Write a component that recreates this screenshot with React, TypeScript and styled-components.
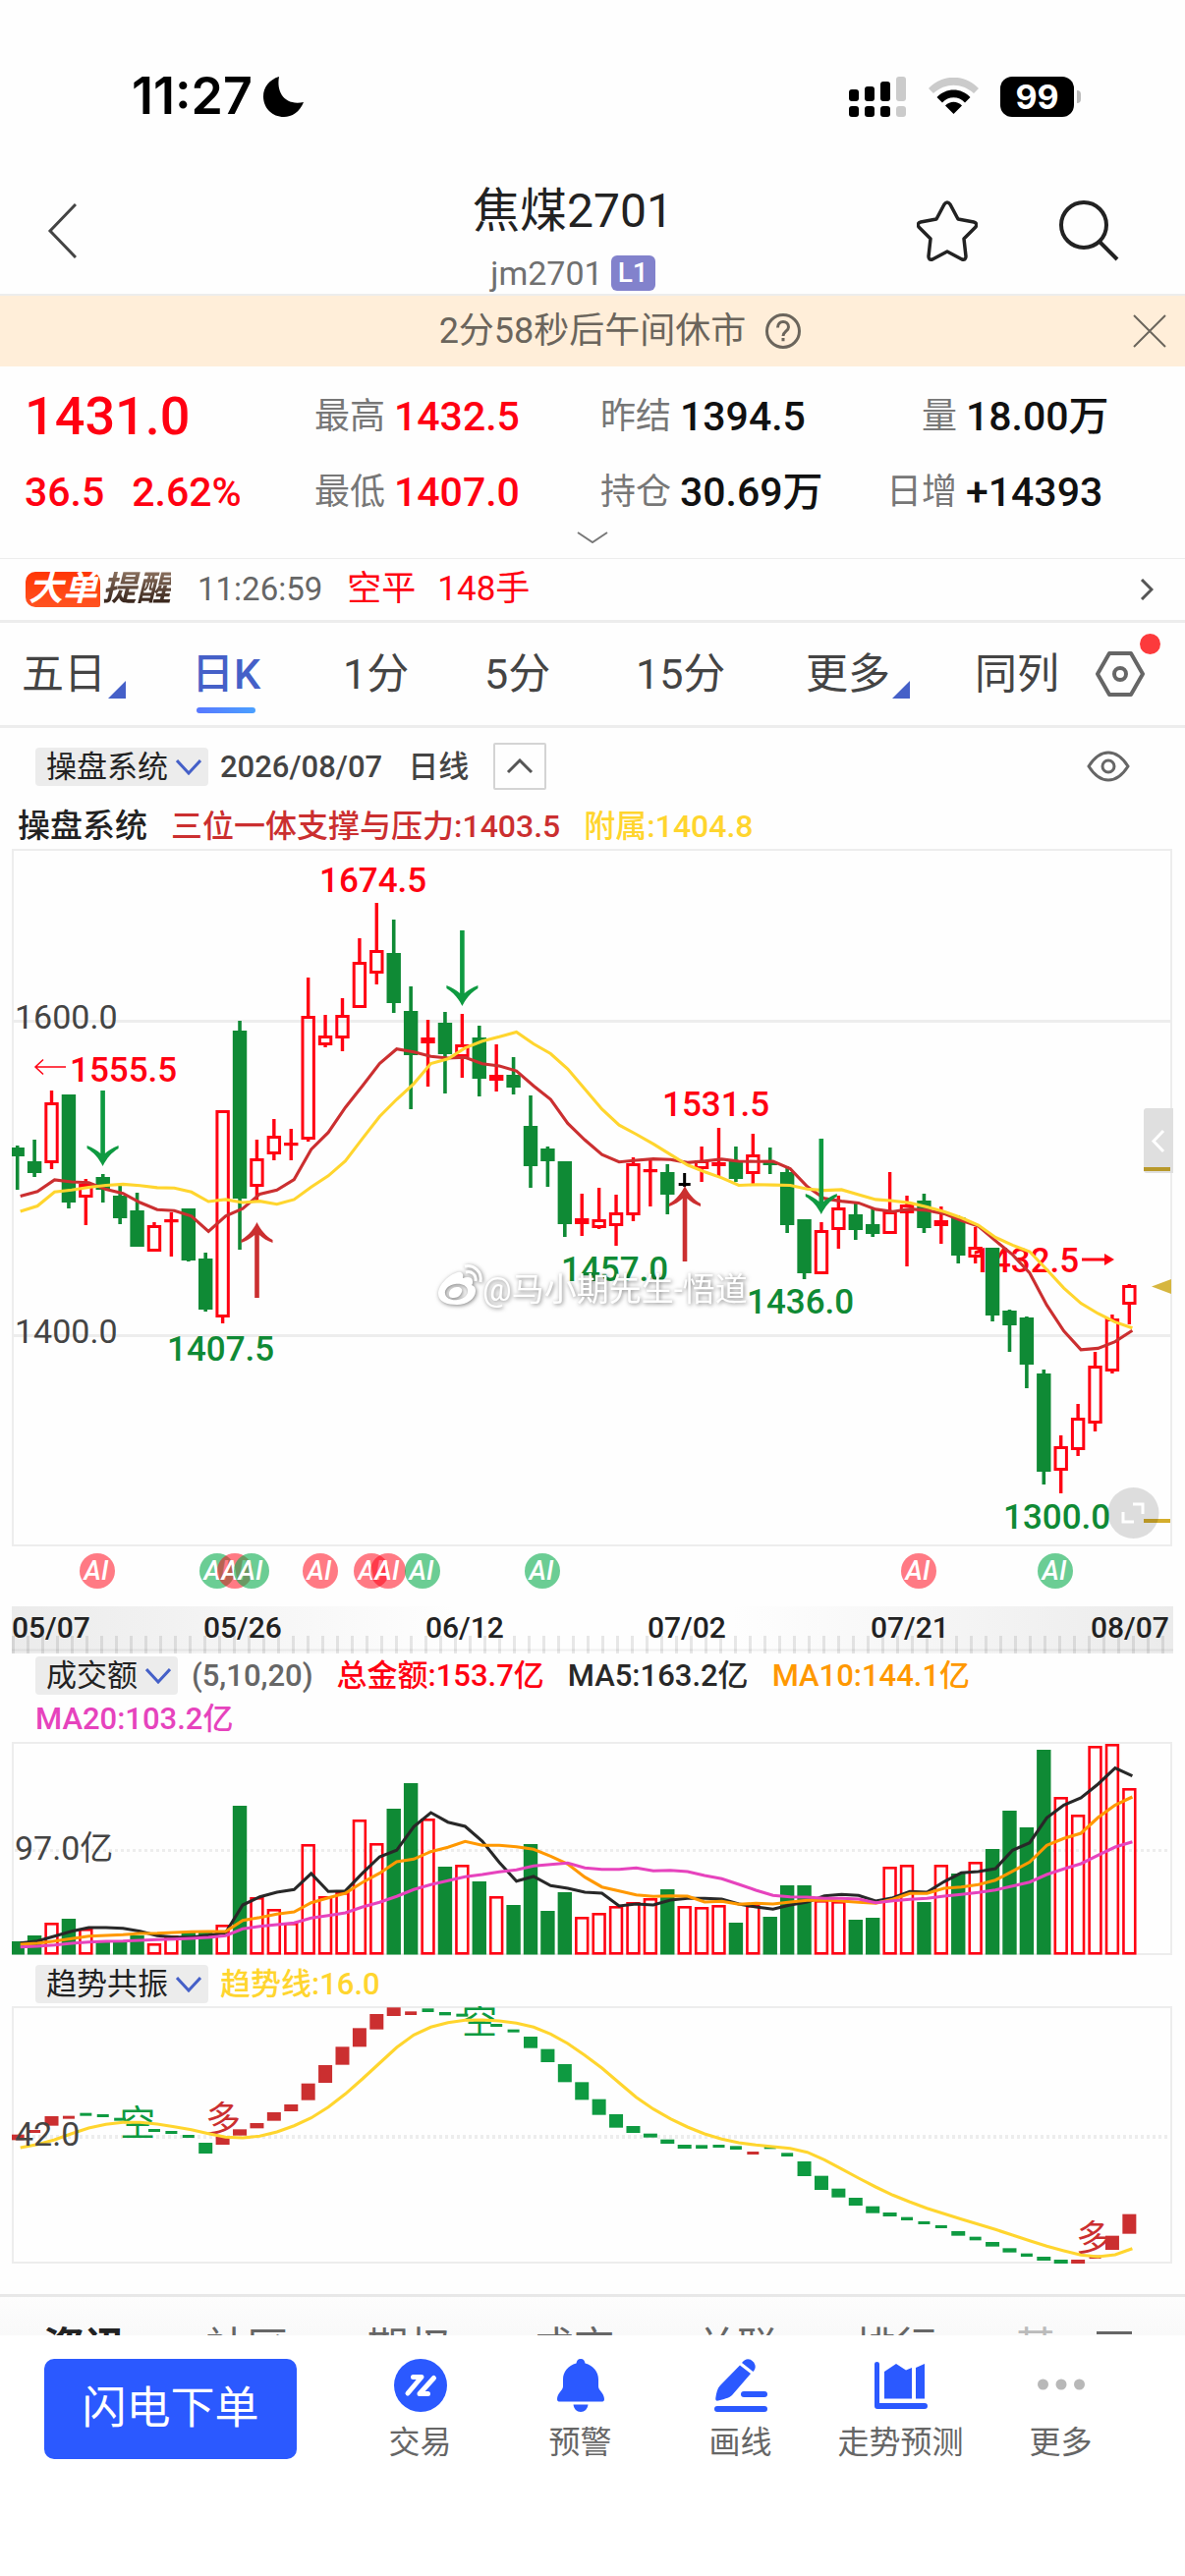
import React from 'react';
import styled, { createGlobalStyle, css } from 'styled-components';

const RED = '#ff0012';
const GREEN = '#0f8a35';
const TREND_RED = '#cb2f30';
const TREND_GREEN = '#0e9a41';
const YELLOW = '#ffd52e';
const BLUE = '#2b59ff';
const LINK = '#4560c8';
const RULE = '#ededed';
const FONT = "Roboto, 'Noto Sans CJK SC', sans-serif";

const GlobalStyle = createGlobalStyle`
  *, *::before, *::after { box-sizing: border-box; }
  body { margin: 0; background: #fefefe; font-family: ${FONT}; color: #222; }
  button, select { font-family: inherit; color: inherit; border: 0; padding: 0; margin: 0; background: none; }
  dl, dt, dd, h1, p { margin: 0; font-weight: 400; }
  svg { display: block; }
`;

/* ---------- market data ---------- */

const STEP = 17.41;
const slotX = (i: number) => 17.7 + i * STEP;

type Tone = 'g' | 'r' | 'k';
interface Candle { tone: Tone; high: number; top: number; bottom: number; low: number }

const candles: Candle[] = `
g306,308,317,351 g300,322,334,338 r250,262,324,330 g254,254,364,370 r340,345,359,387 g335,338,351,364
g347,357,380,386 g354,372,409,409 r384,387,414,414 r374,381,384,419 g370,370,423,424 g415,421,473,475
r270,270,481,487 g179,189,360,412 r300,319,348,363 r279,296,315,321 r289,303,306,321 r135,174,300,302
r173,194,204,206 r156,173,197,210 r95,119,166,166 r59,107,131,142 g76,110,161,171 g144,169,214,269
r178,196,202,246 g170,181,213,253 r172,203,216,237 g184,196,238,256 r203,234,240,251 g216,234,247,254
g255,286,327,349 g307,309,322,348 g322,322,386,399 r355,380,386,398 r349,381,390,391 r356,374,388,408
r318,324,377,383 r320,330,333,368 g325,333,356,376 k334,344,347,348 r307,321,330,343 r288,323,327,337
g307,322,340,343 r294,315,335,345 g308,323,326,335 g327,333,387,395 g381,381,436,442 r384,392,437,437
r357,369,392,411 g363,376,392,402 g369,386,396,399 r333,373,396,396 r357,366,375,429 g355,362,390,395
r368,382,388,406 g377,379,418,426 r389,409,420,426 g410,410,479,485 g473,474,489,516 g480,481,529,553
g534,538,638,651 r601,612,637,660 r569,583,616,622 r516,530,589,597 r478,482,536,538 r447,448,468,488
`.trim().split(/\s+/).map((s) => {
  const [high, top, bottom, low] = s.slice(1).split(',').map(Number);
  return { tone: s[0] as Tone, high, top, bottom, low };
});

const list = (s: string) => s.trim().split(/\s+/).map(Number);

const supportLine = list(`1038 1024 990 996 998 1018 1030 1057 1078 1081 1097 1142 1097 1075 1032 1020 989 900 850 776
712 646 603 612 625 630 628 647 653 668 712 752 823 872 915 937 932 928 930 939 934 929 935 936 935 957 1010 1045 1053
1058 1077 1084 1076 1080 1090 1110 1127 1170 1211 1265 1360 1437 1492 1488 1468 1435`);
const subLine = list(`1083 1067 1026 1020 1012 1006 1003 1007 1013 1014 1026 1054 1048 1057 1053 1062 1048 1011 978 934
868 803 752 706 646 632 600 580 567 553 588 617 662 722 781 828 855 884 915 946 966 984 1006 1004 1005 1006 1017 1021
1019 1034 1048 1052 1058 1070 1084 1102 1124 1160 1183 1202 1255 1310 1355 1385 1410 1428`);

const volumes = list(`206 200 187 183 193 207 206 200 208 200 197 197 189 68 161 173 187 107 160 156 82 106 71 45 81
130 128 145 160 169 107 175 156 181 177 170 166 162 153 170 171 169 187 169 181 149 149 164 165 184 182 130 128 166 128
137 125 112 73 90 11 59 77 7 5 50`);
const ma5 = list(`1253 1247 1232 1217 1206 1206 1208 1217 1231 1235 1235 1229 1222 1137 1112 1098 1090 1041 1096 1094
1040 990 970 898 855 884 897 942 1007 1064 1050 1078 1086 1098 1101 1140 1134 1137 1122 1117 1117 1119 1134 1143 1150
1137 1128 1109 1105 1108 1125 1115 1096 1098 1066 1039 1035 1026 970 947 871 832 810 768 719 743`);
const ma10 = list(`1257 1254 1247 1240 1232 1230 1228 1224 1223 1221 1219 1218 1218 1184 1175 1165 1158 1130 1115 1101
1068 1040 1005 997 974 961 943 955 955 959 967 988 1012 1052 1082 1094 1106 1111 1109 1110 1128 1126 1135 1132 1134
1128 1123 1122 1125 1129 1132 1120 1102 1102 1086 1082 1075 1061 1034 1006 955 934 918 870 832 807`);
const ma20 = list(`1265 1263 1259 1254 1250 1248 1247 1245 1243 1241 1239 1236 1231 1210 1202 1197 1192 1177 1169 1161
1143 1129 1111 1090 1075 1063 1051 1044 1036 1030 1018 1013 1009 1024 1028 1028 1024 1033 1031 1035 1047 1057 1074 1092
1108 1112 1113 1117 1117 1119 1130 1124 1120 1117 1110 1105 1099 1091 1079 1067 1044 1027 1011 985 960 944`);

const trendBlocks = `r548,565 r534,543 r492,521 r491,500 g482,491 g486,495 g497,506 g513,522 g531,540 g537,546
g549,558 g573,606 r555,579 r532,551 r513,529 r480,506 r456,477 r392,443 r336,390 r280,335 r223,280 r180,227 r160,186
r172,183 g163,174 g174,184 g179,188 g200,210 g210,219 g227,236 g249,284 g287,327 g333,388 g388,442 g440,488 g486,527
g522,543 g545,557 g563,576 g579,591 g580,591 g579,588 g583,594 r600,609 g584,592 g604,615 g630,675 g674,717 g713,740
g741,765 g767,788 g786,798 g800,810 g813,822 g825,834 g843,857 g860,871 g876,890 g895,908 g911,921 g921,933 g930,942
r930,942 r917,927 r857,900 r791,851`.split(/\s+/).map((s) => {
  const [top, bottom] = s.slice(1).split(',').map(Number);
  return { up: s[0] === 'r', top, bottom };
});
const trendLine = list(`588 578 564 545 528 517 511 511 516 524 533 545 556 558 553 540 521 497 464 424 378 330 282
244 220 206 199 198 201 208 220 241 270 306 345 390 434 470 500 525 546 562 573 580 585 590 602 625 653 681 708 733 754
773 790 806 822 838 855 872 889 903 916 921 915 896`);

const priceY = (v: number) => v / 2.9037;
const volumeY = (v: number) => (v - 630) / 3;
const trendY = (v: number) => v / 3 - 52;

const toPoints = (values: number[], scale: (v: number) => number) =>
  values.map((v, i) => `${(slotX(i) + 3).toFixed(1)},${scale(v).toFixed(1)}`).join(' ');

/* ---------- page parts ---------- */

const Page = styled.main`
  display: flex;
  flex-direction: column;
  width: 100%;
`;

const StatusBar = styled.div`
  display: flex;
  justify-content: space-between;
  align-items: center;
  height: 150px;
  padding: 46px 105px 0 134px;
`;
const StatusGroup = styled.div<{ $gap: number }>`
  display: flex;
  align-items: center;
  gap: ${(p) => p.$gap}px;
`;
const Clock = styled.time`
  font: 600 52px/60px Inter, sans-serif;
  color: #000;
`;
const Battery = styled.span`
  position: relative;
  display: grid;
  place-items: center;
  width: 75px;
  height: 41px;
  margin-right: 8px;
  border-radius: 12px;
  background: #000;
  color: #fff;
  font: 700 34px/41px Inter, sans-serif;
  &::after {
    content: '';
    position: absolute;
    right: -7px;
    top: 14px;
    width: 4px;
    height: 13px;
    border-radius: 0 4px 4px 0;
    background: #bbb;
  }
`;

const Header = styled.header`
  display: grid;
  grid-template-columns: 233px 1fr 273px;
  align-items: center;
  height: 151px;
  border-bottom: 2px solid ${RULE};
`;
const IconButton = styled.button`
  display: grid;
  place-items: center;
  cursor: pointer;
`;
const BackSlot = styled.div`
  display: flex;
  padding: 20px 0 0 48px;
`;
const HeaderActions = styled.div`
  display: flex;
  gap: 82px;
  padding: 20px 0 0 0;
`;
const TitleBlock = styled.div`
  display: flex;
  flex-direction: column;
  align-items: center;
  gap: 10px;
  padding-top: 32px;
`;
const Title = styled.h1`
  font-size: 48px;
  line-height: 64px;
`;
const Code = styled.p`
  display: flex;
  align-items: center;
  gap: 8px;
  font-size: 34px;
  line-height: 42px;
  color: #707070;
`;
const Level = styled.span`
  width: 45px;
  border-radius: 6px;
  background: #8282cc;
  color: #fff;
  font-size: 28px;
  line-height: 36px;
  font-weight: 500;
  text-align: center;
`;

const Banner = styled.div`
  display: grid;
  grid-template-columns: 1fr auto 1fr;
  align-items: center;
  height: 72px;
  padding: 0 18px 0 74px;
  background: #ffeed9;
  color: #6b655c;
  font-size: 36px;
  line-height: 44px;
`;
const BannerText = styled.p`
  grid-column: 2;
  display: flex;
  align-items: center;
  gap: 20px;
`;
const BannerClose = styled(IconButton)`
  justify-self: end;
`;

const Quote = styled.section`
  height: 195px;
  padding: 17px 0 0 25px;
`;
const QuoteGrid = styled.dl`
  display: grid;
  grid-template-columns: 295fr 291fr 291fr 304fr;
  grid-template-rows: 68px 60px;
  row-gap: 13px;
  align-items: center;
  line-height: 48px;
`;
const Price = styled.div<{ $big?: boolean }>`
  display: flex;
  gap: 28px;
  color: ${RED};
  font-weight: 500;
  font-size: ${(p) => (p.$big ? 54 : 41)}px;
`;
const Stat = styled.div`
  display: grid;
  grid-template-columns: 72px auto;
  column-gap: 9px;
  align-items: center;
  justify-content: start;
`;
const StatLabel = styled.dt`
  font-size: 36px;
  color: #777;
  text-align: right;
  white-space: nowrap;
`;
const StatValue = styled.dd<{ $up?: boolean }>`
  font-size: 41px;
  font-weight: 500;
  white-space: nowrap;
  color: ${(p) => (p.$up ? RED : '#111')};
`;
const Expand = styled(IconButton)`
  margin: 10px 0 0 562px;
`;

const AlertRow = styled.a`
  display: flex;
  align-items: center;
  height: 63px;
  padding: 0 32px 0 26px;
  border-top: 1px solid ${RULE};
  text-decoration: none;
  font-size: 35px;
  line-height: 44px;
  color: ${RED};
`;
const AlertBrand = styled.span`
  display: flex;
  align-items: center;
  gap: 2px;
  font-size: 35px;
  line-height: 36px;
  font-weight: 700;
  font-style: italic;
`;
const BrandTag = styled.span`
  width: 76px;
  border-radius: 10px 10px 2px 10px;
  background: linear-gradient(#ff3605, #ff5321);
  color: #fff;
  text-align: center;
`;
const BrandWord = styled.span`
  background: linear-gradient(#8a705e, #2c1a12);
  background-clip: text;
  -webkit-background-clip: text;
  color: transparent;
`;
const AlertTime = styled.time`
  margin: 0 25px 0 27px;
  font-size: 33px;
  color: #666;
`;
const AlertCount = styled.span`
  margin-left: 22px;
`;
const AlertArrow = styled.span`
  margin-left: auto;
`;

const Periods = styled.nav`
  display: grid;
  grid-template-columns: 173fr 154fr 144fr 154fr 173fr 172fr 123fr 91fr;
  align-items: center;
  height: 110px;
  padding-left: 22px;
  border-top: 3px solid ${RULE};
  border-bottom: 3px solid ${RULE};
`;
const Period = styled.button<{ $active?: boolean; $menu?: boolean }>`
  position: relative;
  justify-self: start;
  font-size: 43px;
  line-height: 104px;
  color: #444;
  white-space: nowrap;
  cursor: pointer;
  ${(p) => p.$active && css`
    color: ${LINK};
    font-weight: 500;
    &::after {
      content: '';
      position: absolute;
      left: 5px;
      bottom: 12px;
      width: 60px;
      height: 6px;
      border-radius: 3px;
      background: linear-gradient(90deg, #5878ff, #4aa0ff);
    }
  `}
  ${(p) => p.$menu && css`
    &::after {
      content: '';
      position: absolute;
      right: -20px;
      bottom: 27px;
      border-left: 18px solid transparent;
      border-bottom: 18px solid ${LINK};
    }
  `}
`;
const Settings = styled(IconButton)`
  position: relative;
  justify-self: start;
  &::after {
    content: '';
    position: absolute;
    right: -16px;
    top: -18px;
    width: 21px;
    height: 21px;
    border-radius: 50%;
    background: #fc3a3c;
  }
`;

const Toolbar = styled.div<{ $height: number }>`
  display: flex;
  align-items: center;
  height: ${(p) => p.$height}px;
  padding: 0 56px 0 36px;
  font-size: 31px;
  line-height: 39px;
  white-space: nowrap;
`;
const PickerBox = styled.label`
  position: relative;
  display: inline-flex;
  height: 39px;
  border-radius: 4px;
  background: #ececec;
`;
const PickerSelect = styled.select`
  appearance: none;
  height: 39px;
  padding: 0 41px 0 11px;
  font-size: 31px;
  line-height: 39px;
  color: #222;
`;
const PickerChevron = styled.svg`
  position: absolute;
  right: 7px;
  top: 12px;
  pointer-events: none;
`;
const ToolbarDate = styled.time`
  margin: 0 26px 0 12px;
  font-weight: 500;
  color: #444;
`;
const Collapse = styled(IconButton)`
  width: 54px;
  height: 48px;
  margin-left: 25px;
  border: 2px solid #d4d4d4;
  border-radius: 2px;
`;
const EyeButton = styled(IconButton)`
  margin-left: auto;
`;
const LineKind = styled.span`
  color: #444;
  font-weight: 500;
`;
const Legend = styled.div`
  display: flex;
  gap: 24px;
  height: 41px;
  padding-left: 18px;
  font-size: 32px;
  line-height: 44px;
  font-weight: 500;
  white-space: nowrap;
`;
const LegendName = styled.span`
  font-size: 33px;
`;
const Reading = styled.span<{ $color: string; $gap?: number }>`
  margin-left: ${(p) => p.$gap ?? 0}px;
  color: ${(p) => p.$color};
  font-weight: 500;
`;

const Chart = styled.svg`
  width: 100%;
  height: auto;
  font-family: ${FONT};
`;
const PriceTag = styled.text`
  font-size: 35px;
  font-weight: 500;
`;
const ScaleText = styled.text`
  font-size: 34px;
  fill: #444;
`;
const AxisText = styled.text`
  font-size: 30px;
  font-weight: 500;
  fill: #222;
`;
const SignalText = styled.text`
  font-size: 36px;
  text-anchor: middle;
`;
const AiText = styled.text`
  font-size: 27px;
  font-weight: 500;
  font-style: italic;
  fill: #fff;
  text-anchor: middle;
`;
const Watermark = styled.g`
  fill: #fff;
  font-size: 33px;
  filter: drop-shadow(1px 1px 2px rgba(0, 0, 0, 0.5));
`;

const NewsTabs = styled.nav`
  display: grid;
  grid-template-columns: 165fr 164fr 168fr 166fr 161fr 163fr 83fr 90fr;
  height: 42px;
  padding: 25px 0 0 44px;
  border-top: 3px solid #e8e8e8;
  overflow: hidden;
  background: linear-gradient(#fdfdfd, #f9f9f9);
`;
const NewsTab = styled.button<{ $active?: boolean; $faded?: boolean }>`
  align-self: start;
  justify-self: start;
  font-size: 42px;
  line-height: 54px;
  white-space: nowrap;
  font-weight: ${(p) => (p.$active ? 700 : 400)};
  color: ${(p) => (p.$active ? '#222' : p.$faded ? '#bbb' : '#666')};
`;
const NewsMenu = styled.button`
  align-self: start;
  width: 36px;
  height: 36px;
  margin-top: 10px;
  border-top: 3px solid #666;
`;

const BottomBar = styled.footer`
  display: flex;
  align-items: flex-start;
  padding: 24px 45px 119px;
  background: #fff;
`;
const OrderButton = styled.button`
  width: 257px;
  height: 102px;
  border-radius: 10px;
  background: ${BLUE};
  color: #fff;
  font-size: 45px;
  line-height: 102px;
  cursor: pointer;
`;
const Actions = styled.nav`
  display: grid;
  grid-template-columns: repeat(5, 1fr);
  flex: 1;
  margin-left: 44px;
`;
const Action = styled.button`
  display: flex;
  flex-direction: column;
  align-items: center;
  gap: 7px;
  font-size: 32px;
  line-height: 48px;
  color: #666;
  white-space: nowrap;
  cursor: pointer;
`;

/* ---------- pieces ---------- */

function Picker({ label, value }: { label: string; value: string }) {
  return (
    <PickerBox>
      <PickerSelect aria-label={label} defaultValue={value}>
        <option>{value}</option>
      </PickerSelect>
      <PickerChevron width="26" height="16" viewBox="0 0 26 16" fill="none" stroke={LINK} strokeWidth="3">
        <path d="M1 1 13 14 25 1" />
      </PickerChevron>
    </PickerBox>
  );
}

function Arrow({ x, tip, down }: { x: number; tip: number; down?: boolean }) {
  const d = down ? -1 : 1;
  return (
    <g transform={`translate(${x} ${tip}) scale(1 ${d})`} fill={down ? TREND_GREEN : TREND_RED}>
      <rect x="-2.3" y="8" width="4.6" height="69" />
      <path d="M0 0C4 8 9 14 16 18V21C10 19 6 16 2.3 13H-2.3C-6 16-10 19-16 21V18C-9 14-4 8 0 0Z" />
    </g>
  );
}

const signals: [number, boolean][] = [
  [99, true], [221, false], [239, true], [256, false], [326, true], [378, true],
  [395, true], [430, false], [552, false], [935, true], [1074, false],
];

const priceTags: [number, number, string, string][] = [
  [325, 48, RED, '1674.5'], [71, 241, RED, '1555.5'], [170, 525, GREEN, '1407.5'], [571, 444, GREEN, '1457.0'],
  [674, 276, RED, '1531.5'], [760, 477, GREEN, '1436.0'], [989, 435, RED, '1432.5'], [1021, 696, GREEN, '1300.0'],
];

function PriceChart() {
  return (
    <Chart viewBox="0 0 1206 775" role="img" aria-label="日K">
      <g fill="none" stroke={RULE} strokeWidth="2">
        <rect x="13" y="5" width="1179" height="708" />
        <path d="M13 179.5H1192M13 499.5H1192" strokeWidth="3" />
      </g>
      <ScaleText x="15" y="187">1600.0</ScaleText>
      <ScaleText x="15" y="507">1400.0</ScaleText>
      {priceTags.map(([x, y, fill, text]) => (
        <PriceTag key={text} x={x} y={y} fill={fill}>{text}</PriceTag>
      ))}
      <path d="M67 226H36M44 218.500 36 226l8 7.500" fill="none" stroke={RED} strokeWidth="1.500" />
      <path d="M1101 422h24" stroke={RED} strokeWidth="3" />
      <path d="M1124 416l10 6-10 6z" fill={RED} />
      {candles.map((c, i) => {
        const x = slotX(i);
        if (c.tone === 'k') {
          return <path key={i} d={`M${x} ${c.high}V348M${x - 6} 345.500H${x + 6}`} stroke="#000" strokeWidth="3" />;
        }
        if (c.tone === 'g') {
          const left = Math.max(12, x - 7.2);
          return (
            <g key={i} fill={GREEN}>
              <rect x={x - 1.8} y={c.high} width="3.600" height={c.low - c.high} />
              <rect x={left} y={c.top} width={x + 7.2 - left} height={c.bottom - c.top} />
            </g>
          );
        }
        return (
          <g key={i} stroke={RED} strokeWidth="3">
            <path d={`M${x} ${c.high}V${c.top + 1}M${x} ${c.bottom - 1}V${c.low}`} strokeWidth="3.400" />
            <rect x={x - 5.7} y={c.top + 1.5} width="11.400" height={Math.max(0.2, c.bottom - c.top - 3)} fill="none" />
          </g>
        );
      })}
      <polyline points={toPoints(supportLine, priceY)} fill="none" stroke={TREND_RED} strokeWidth="3.100" />
      <polyline points={toPoints(subLine, priceY)} fill="none" stroke={YELLOW} strokeWidth="3.100" />
      <Arrow x={104.6} tip={327} down />
      <Arrow x={470.4} tip={164} down />
      <Arrow x={835.8} tip={376} down />
      <Arrow x={261.5} tip={384} />
      <Arrow x={697} tip={347} />
      <Watermark>
        <path
          fillRule="evenodd"
          d="M446 457c0-9 11-20 20-22 4-1 6 2 5 6 5-2 10-1 10 3 0 2 0 3-1 4 3 1 4 3 4 6 0 8-9 14-19 14s-19-3-19-11Zm7 0c1 5 7 7 13 6s11-5 10-10-7-7-13-6-11 5-10 10Zm4 0c0-4 4-7 8-7s6 2 5 5-4 6-8 6-5-1-5-4Z"
        />
        <path d="M474 435c6-2 11 3 10 9M473 429c9-2 18 5 16 16" fill="none" stroke="#fff" strokeWidth="3" />
        <text x="491" y="464">@马小期先生-悟道</text>
      </Watermark>
      <path d="M1172 449.500 1192 442V457Z" fill="#d6b63f" />
      <path d="M1164 688h27" stroke="#d4ad2c" strokeWidth="4" />
      <path d="M1167 268H1194V334H1167q-3 0-3-3V271q0-3 3-3Z" fill="#dfdfdf" />
      <path d="M1184 291 1174 301.500 1184 312" fill="none" stroke="#fff" strokeWidth="3" />
      <path d="M1164 330h27" stroke="#b8992a" strokeWidth="4" />
      <circle cx="1153.500" cy="680" r="26" fill="#000" fillOpacity=".13" />
      <path d="M1153 671h10v10M1143 679v10h11" fill="none" stroke="#fff" strokeWidth="3" />
      {signals.map(([x, hot]) => (
        <g key={x}>
          <circle cx={x} cy="739" r="18" fill={hot ? '#ff0014' : '#08ac4c'} fillOpacity={hot ? 0.52 : 0.6} />
          <AiText x={x - 1} y="748">AI</AiText>
        </g>
      ))}
    </Chart>
  );
}

const dates: [number, string][] = [[12, '05/07'], [207, '05/26'], [433, '06/12'], [659, '07/02'], [886, '07/21'], [1110, '08/07']];

function DateAxis() {
  return (
    <Chart viewBox="0 0 1206 48" role="img" aria-label="日期">
      <defs>
        <linearGradient id="axis">
          <stop offset="0" stopColor="#ebebeb" />
          <stop offset=".38" stopColor="#fefefe" />
          <stop offset=".62" stopColor="#fefefe" />
          <stop offset="1" stopColor="#ebebeb" />
        </linearGradient>
      </defs>
      <rect x="12" width="1182" height="48" fill="url(#axis)" />
      <path d="M12 44.500H1194" stroke="#000" strokeOpacity=".06" strokeWidth="2" />
      {Array.from({ length: 79 }, (_, i) => (
        <rect key={i} x={12 + i * 15} y="30" width="3" height="18" fillOpacity=".09" />
      ))}
      {dates.map(([x, text]) => <AxisText key={text} x={x} y="32">{text}</AxisText>)}
    </Chart>
  );
}

function VolumeChart() {
  return (
    <Chart viewBox="0 0 1206 227" role="img" aria-label="成交额">
      <rect x="13" y="4" width="1179" height="215" fill="none" stroke={RULE} strokeWidth="2" />
      <path d="M15 113.500H1192" stroke={RULE} strokeWidth="3" strokeDasharray="3 3" />
      <ScaleText x="15" y="123">97.0亿</ScaleText>
      {volumes.map((top, i) => {
        const x = slotX(i);
        const left = Math.max(12, x - 7.2);
        return candles[i].tone === 'g'
          ? <rect key={i} x={left} y={top} width={x + 7.2 - left} height={219.5 - top} fill={GREEN} />
          : <rect key={i} x={x - 5.9} y={top + 1.3} width="11.800" height={217 - top} fill="none" stroke={RED} strokeWidth="2.600" />;
      })}
      <g fill="none" strokeWidth="3.100">
        <polyline points={toPoints(ma5, volumeY)} stroke="#282828" />
        <polyline points={toPoints(ma10, volumeY)} stroke="#ff9800" />
        <polyline points={toPoints(ma20, volumeY)} stroke="#e643bd" />
      </g>
    </Chart>
  );
}

function TrendChart() {
  return (
    <Chart viewBox="0 0 1206 293" role="img" aria-label="趋势共振">
      <rect x="13" y="1" width="1179" height="260" fill="none" stroke={RULE} strokeWidth="2" />
      <path d="M15 133H1192" stroke={RULE} strokeWidth="4" strokeDasharray="3 3" />
      {trendBlocks.map((b, i) => {
        const left = Math.max(12, slotX(i) - 7);
        const thin = b.bottom - b.top < 12 ? 1 : 0;
        return (
          <rect key={i} x={left + thin} y={trendY(b.top)} width={slotX(i) + 7 - left - thin * 2}
            height={(b.bottom - b.top) / 3} fill={b.up ? TREND_RED : TREND_GREEN} />
        );
      })}
      <SignalText x="140" y="132" fill={TREND_GREEN}>空</SignalText>
      <SignalText x="488" y="28" fill={TREND_GREEN}>空</SignalText>
      <SignalText x="227" y="128" fill={TREND_RED}>多</SignalText>
      <SignalText x="1113" y="249" fill={TREND_RED}>多</SignalText>
      <polyline points={toPoints(trendLine, trendY)} fill="none" stroke={YELLOW} strokeWidth="3.100" />
      <ScaleText x="15" y="142">42.0</ScaleText>
    </Chart>
  );
}

const stats: [string, string, boolean][][] = [
  [['最高', '1432.5', true], ['昨结', '1394.5', false], ['量', '18.00万', false]],
  [['最低', '1407.0', true], ['持仓', '30.69万', false], ['日增', '+14393', false]],
];

const StatCells = ({ row }: { row: [string, string, boolean][] }) => (
  <>
    {row.map(([label, value, up]) => (
      <Stat key={label}>
        <StatLabel>{label}</StatLabel>
        <StatValue $up={up}>{value}</StatValue>
      </Stat>
    ))}
  </>
);

const periods: { label: string; active?: boolean; menu?: boolean }[] = [
  { label: '五日', menu: true }, { label: '日K', active: true }, { label: '1分' }, { label: '5分' },
  { label: '15分' }, { label: '更多', menu: true }, { label: '同列' },
];

const actions: { label: string; icon: React.ReactNode }[] = [
  {
    label: '交易',
    icon: (
      <>
        <circle cx="27" cy="27" r="27" fill={BLUE} />
        <path d="M19.500 18.500h8.500L14 35M34.500 35.500H26L40.500 19.500" fill="none" stroke="#fff" strokeWidth="5" strokeLinecap="round" strokeLinejoin="round" />
      </>
    ),
  },
  {
    label: '预警',
    icon: (
      <g fill={BLUE}>
        <path d="M27 0c3 0 4 2 4.500 4.500C40 7 45 13 45 21v7c0 4 6 7 6 13 0 2-1 2.500-3 2.500H6c-2 0-3-.5-3-2.500 0-6 6-9 6-13v-7C9 13 14 7 22.500 4.500 23 2 24 0 27 0Z" />
        <path d="M19.500 46.500h15c-.5 4.500-3.500 7.500-7.500 7.500s-7-3-7.500-7.500Z" />
      </g>
    ),
  },
  {
    label: '画线',
    icon: (
      <g fill={BLUE}>
        <path d="M26 6.500 37 15 18 37c-3 3-9 4-14 5.500-2 .5-3-.5-2.700-2.500C2 35 3 30 6 27Z" />
        <path d="M28 4c3-4 7-5 10.500-2S43 9 39.500 13Z" />
        <rect x="27" y="33" width="27" height="6" rx="3" />
        <rect y="48" width="54" height="6" rx="3" />
      </g>
    ),
  },
  {
    label: '走势预测',
    icon: (
      <g fill={BLUE}>
        <path d="M0 5q0-2 2.500-2T5 5V45H51q3 0 3 3t-3 3H3q-3 0-3-3Z" />
        <path d="M10 13 22 5 32 11.500 38 9V40.500H10Z" />
        <path d="M42 9 51 5V40.500H42Z" />
      </g>
    ),
  },
  {
    label: '更多',
    icon: (
      <g fill="#b8b8b8">
        <circle cx="8.500" cy="26" r="5.500" /><circle cx="27" cy="26" r="5.500" /><circle cx="45.500" cy="26" r="5.500" />
      </g>
    ),
  },
];

const newsTabs = ['资讯', '社区', '期权', '成交', '关联', '排行', '基'];

export default function App() {
  return (
    <Page>
      <GlobalStyle />
      <StatusBar>
        <StatusGroup $gap={11}>
          <Clock>11:27</Clock>
          <svg width="41" height="41" viewBox="0 0 41 41"><path d="M16 0C13 16 22 30 41 26 37 36 29 41 21 41 9 41 0 32 0 20 0 11 6 3 16 0Z" /></svg>
        </StatusGroup>
        <StatusGroup $gap={22}>
          <svg width="59" height="41" viewBox="0 0 59 41">
            <rect y="13" width="10" height="12" rx="3" /><rect x="16" y="10" width="10" height="15" rx="3" />
            <rect x="32" y="5" width="10" height="20" rx="3" /><rect x="48" width="10" height="25" rx="3" fill="#cbcbcb" />
            <rect y="30" width="10" height="11" rx="3" /><rect x="16" y="30" width="10" height="11" rx="3" />
            <rect x="32" y="30" width="10" height="11" rx="3" /><rect x="48" y="30" width="10" height="11" rx="3" fill="#cbcbcb" />
          </svg>
          <svg width="51" height="38" viewBox="0 0 51 38">
            <path d="M0 11C14-4 37-4 51 11l-5 5C34 5 17 5 5 16Z" fill="#cbcbcb" />
            <path d="M8.500 20c9-10 25-10 34 0l-5.500 5.500c-6-7-17-7-23 0Z" />
            <path d="M17 28.500c5-5 12-5 17 0L25.500 37Z" />
          </svg>
          <Battery>99</Battery>
        </StatusGroup>
      </StatusBar>

      <Header>
        <BackSlot>
          <IconButton aria-label="返回">
            <svg width="30" height="56" viewBox="0 0 30 56" fill="none" stroke="#444" strokeWidth="3"><path d="M29 1 3 28 29 55" /></svg>
          </IconButton>
        </BackSlot>
        <TitleBlock>
          <Title>焦煤2701</Title>
          <Code>jm2701<Level>L1</Level></Code>
        </TitleBlock>
        <HeaderActions>
          <IconButton aria-label="自选">
            <svg width="62" height="62" viewBox="0 0 62 62" fill="none" stroke="#222" strokeWidth="3.500" strokeLinejoin="round">
              <path d="M28 4q3-4 6 0l8 15 16 3q4 1 2 5L48 39l2 18q0 4-4 3L31 52 16 60q-4 1-4-3l2-18L2 27q-2-4 2-5l16-3Z" />
            </svg>
          </IconButton>
          <IconButton aria-label="搜索">
            <svg width="62" height="62" viewBox="0 0 62 62" fill="none" stroke="#222" strokeWidth="4">
              <circle cx="26" cy="25" r="23" /><path d="M42 42 60 60" />
            </svg>
          </IconButton>
        </HeaderActions>
      </Header>

      <Banner>
        <BannerText>
          2分58秒后午间休市
          <svg width="36" height="36" viewBox="0 0 36 36" fill="none" stroke="#6b655c" strokeWidth="3">
            <circle cx="18" cy="18" r="16.500" />
            <path d="M12.500 14.500c0-4 2.500-6 5.500-6s5.500 2 5.500 5.500c0 4-5.500 4.500-5.500 9M18 25v3.200" />
          </svg>
        </BannerText>
        <BannerClose aria-label="关闭">
          <svg width="36" height="36" viewBox="0 0 36 36" fill="none" stroke="#6b655c" strokeWidth="2"><path d="M2 2 34 34M34 2 2 34" /></svg>
        </BannerClose>
      </Banner>

      <Quote>
        <QuoteGrid>
          <Price $big>1431.0</Price>
          <StatCells row={stats[0]} />
          <Price><span>36.5</span><span>2.62%</span></Price>
          <StatCells row={stats[1]} />
        </QuoteGrid>
        <Expand aria-label="展开">
          <svg width="32" height="12" viewBox="0 0 32 12" fill="none" stroke="#777" strokeWidth="2"><path d="M1 1 16 11 31 1" /></svg>
        </Expand>
      </Quote>

      <AlertRow href="#alerts">
        <AlertBrand><BrandTag>大单</BrandTag><BrandWord>提醒</BrandWord></AlertBrand>
        <AlertTime>11:26:59</AlertTime>
        <span>空平</span>
        <AlertCount>148手</AlertCount>
        <AlertArrow>
          <svg width="14" height="22" viewBox="0 0 14 22" fill="none" stroke="#555" strokeWidth="3"><path d="M2 1 12 11 2 21" /></svg>
        </AlertArrow>
      </AlertRow>

      <Periods>
        {periods.map((p) => <Period key={p.label} $active={p.active} $menu={p.menu}>{p.label}</Period>)}
        <Settings aria-label="设置">
          <svg width="50" height="46" viewBox="0 0 50 46" fill="none" stroke="#666" strokeWidth="4" strokeLinejoin="round">
            <path d="M14 2H36L48 23 36 44H14L2 23Z" /><circle cx="25" cy="23" r="6" />
          </svg>
        </Settings>
      </Periods>

      <Toolbar $height={78}>
        <Picker label="主图指标" value="操盘系统" />
        <ToolbarDate>2026/08/07</ToolbarDate>
        <LineKind>日线</LineKind>
        <Collapse aria-label="收起">
          <svg width="28" height="16" viewBox="0 0 28 16" fill="none" stroke="#555" strokeWidth="3"><path d="M2 14 14 2 26 14" /></svg>
        </Collapse>
        <EyeButton aria-label="显示">
          <svg width="44" height="32" viewBox="0 0 44 32" fill="none" stroke="#666" strokeWidth="3">
            <path d="M2 16C9 5 16 2 22 2s13 3 20 14C35 27 28 30 22 30S9 27 2 16Z" /><circle cx="22" cy="16" r="6" />
          </svg>
        </EyeButton>
      </Toolbar>
      <Legend>
        <LegendName>操盘系统</LegendName>
        <Reading $color={TREND_RED}>三位一体支撑与压力:1403.5</Reading>
        <Reading $color={YELLOW}>附属:1404.8</Reading>
      </Legend>
      <PriceChart />
      <DateAxis />

      <Toolbar $height={45}>
        <Picker label="副图指标一" value="成交额" />
        <Reading $color="#666" $gap={14}>(5,10,20)</Reading>
        <Reading $color={RED} $gap={24}>总金额:153.7亿</Reading>
        <Reading $color="#282828" $gap={24}>MA5:163.2亿</Reading>
        <Reading $color="#ff9800" $gap={24}>MA10:144.1亿</Reading>
      </Toolbar>
      <Toolbar $height={42}>
        <Reading $color="#e643bd">MA20:103.2亿</Reading>
      </Toolbar>
      <VolumeChart />

      <Toolbar $height={45}>
        <Picker label="副图指标二" value="趋势共振" />
        <Reading $color={YELLOW} $gap={12}>趋势线:16.0</Reading>
      </Toolbar>
      <TrendChart />

      <NewsTabs>
        {newsTabs.map((t, i) => <NewsTab key={t} $active={i === 0} $faded={i === 6}>{t}</NewsTab>)}
        <NewsMenu aria-label="菜单" />
      </NewsTabs>

      <BottomBar>
        <OrderButton>闪电下单</OrderButton>
        <Actions>
          {actions.map((a) => (
            <Action key={a.label}>
              <svg width="54" height="54" viewBox="0 0 54 54">{a.icon}</svg>
              {a.label}
            </Action>
          ))}
        </Actions>
      </BottomBar>
    </Page>
  );
}
